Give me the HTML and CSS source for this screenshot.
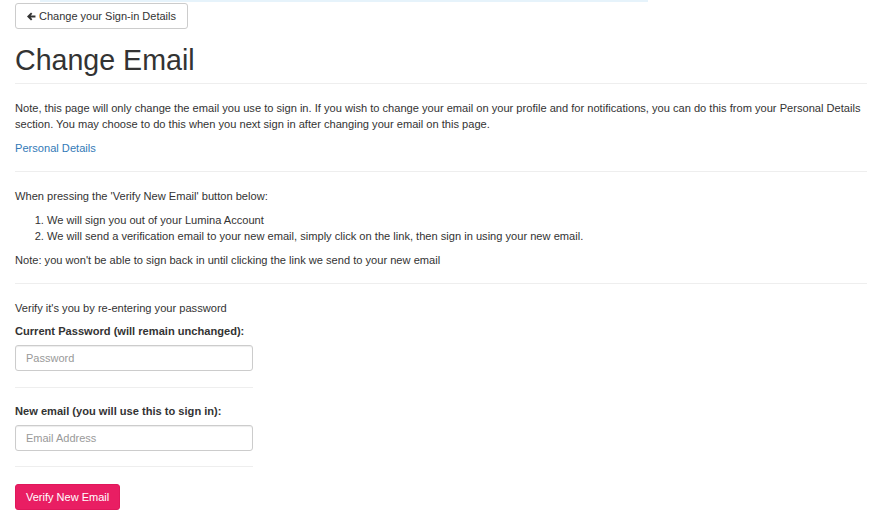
FILE: index.html
```html
<!DOCTYPE html>
<html lang="en">
<head>
<meta charset="utf-8">
<title>Change Email</title>
<link rel="stylesheet" href="styles.css">
</head>
<body>
<div class="topline"></div>
<div class="container">
  <a class="btn btn-default" href="#"><svg class="arrow" viewBox="0 0 10 10" aria-hidden="true"><path d="M5.2 1.2 L1.4 5 L5.2 8.8 M1.6 5 H9.4" fill="none" stroke="#333" stroke-width="2.1" stroke-linejoin="miter" stroke-linecap="butt"/></svg> Change your Sign-in Details</a>
  <h1>Change Email</h1>
  <hr class="hr-head">
  <p>Note, this page will only change the email you use to sign in. If you wish to change your email on your profile and for notifications, you can do this from your Personal Details section. You may choose to do this when you next sign in after changing your email on this page.</p>
  <p><a class="link" href="#">Personal Details</a></p>
  <hr>
  <p>When pressing the 'Verify New Email' button below:</p>
  <ol>
    <li>We will sign you out of your Lumina Account</li>
    <li>We will send a verification email to your new email, simply click on the link, then sign in using your new email.</li>
  </ol>
  <p>Note: you won't be able to sign back in until clicking the link we send to your new email</p>
  <hr>
  <form class="form">
    <p class="form-intro">Verify it's you by re-entering your password</p>
    <label class="label" for="pw">Current Password (will remain unchanged):</label>
    <input class="input" id="pw" type="password" placeholder="Password">
    <hr class="hr-form">
    <label class="label" for="em">New email (you will use this to sign in):</label>
    <input class="input" id="em" type="email" placeholder="Email Address">
    <hr>
    <button class="btn btn-primary" type="button">Verify New Email</button>
  </form>
</div>
</body>
</html>
```

FILE: styles.css
```css
* { box-sizing: border-box; }
html, body { margin: 0; padding: 0; background: #fff; }
body {
  font-family: "Liberation Sans", Arial, Helvetica, sans-serif;
  font-size: 11.1px;
  line-height: 16px;
  color: #333;
}
.topline {
  height: 2px;
  width: 608px;
  margin-left: 40px;
  background: #e6f3fb;
}
.container {
  padding: 1px 10px 0 15px;
}
.btn {
  display: inline-flex;
  align-items: center;
  gap: 3px;
  height: 26px;
  padding: 0 11px;
  font-family: inherit;
  font-size: 11px;
  line-height: 1;
  border-radius: 3px;
  border: 1px solid #ccc;
  text-decoration: none;
  cursor: pointer;
}
.btn-default {
  background: #fff;
  color: #333;
}
.arrow {
  width: 9px;
  height: 9px;
}
h1 {
  font-size: 28.6px;
  font-weight: 400;
  line-height: 33px;
  margin: 15px 0 0;
  color: #333;
}
hr {
  border: 0;
  border-top: 1px solid #eee;
  margin: 15px 0 16px;
  height: 0;
}
.hr-head { margin-top: 6px; }
p { margin: 0 0 8px; }
ol {
  margin: 0 0 8px;
  padding-left: 32px;
}
.link { color: #337ab7; text-decoration: none; }
.form { width: 238px; }
.form p { white-space: nowrap; }
.form-intro { margin-bottom: 7px; }
.hr-form { margin: 16px 0 15px; }
.label {
  display: block;
  font-weight: 700;
  margin-bottom: 6px;
  white-space: nowrap;
}
.input {
  display: block;
  width: 238px;
  height: 26px;
  padding: 0 10px;
  border: 1px solid #ccc;
  border-radius: 3px;
  font-family: inherit;
  font-size: 11px;
  color: #555;
  box-shadow: inset 0 1px 1px rgba(0,0,0,0.075);
}
.input::placeholder { color: #999; }
.btn-primary {
  background: #e91e63;
  border-color: #e0185b;
  color: #fff;
  padding: 0 10px;
  margin-top: 1px;
}
```
